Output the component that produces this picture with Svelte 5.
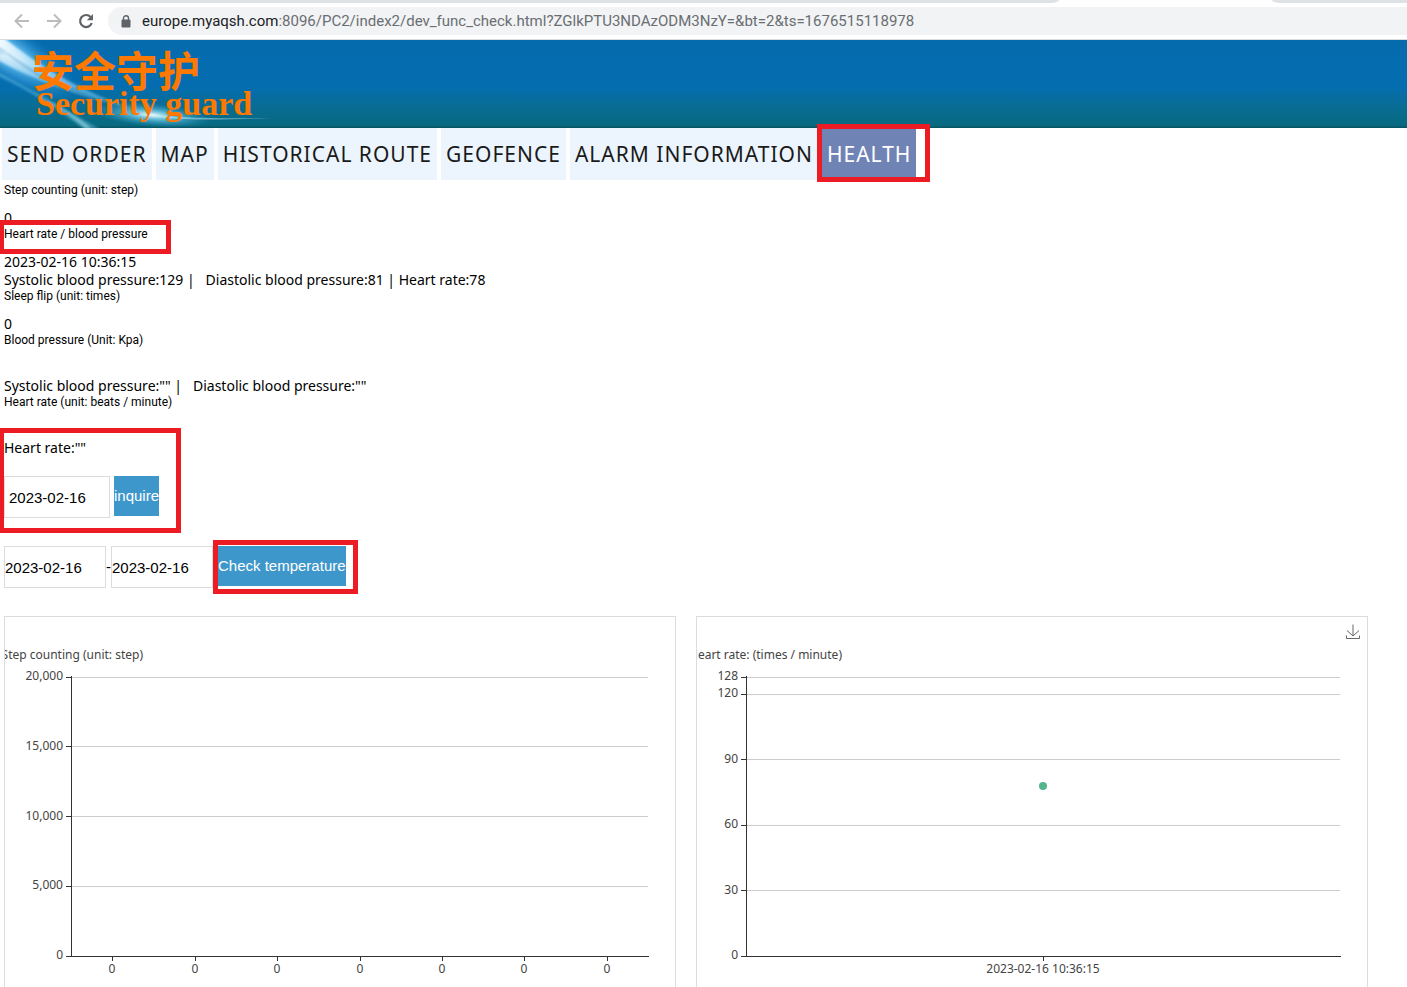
<script lang="ts">
  const tabs = [
    "Send order",
    "Map",
    "Historical route",
    "Geofence",
    "Alarm information",
    "Health",
  ];
  const activeTab = "Health";

  const sections = [
    { title: "Step counting (unit: step)", lines: ["0"] },
    {
      title: "Heart rate / blood pressure",
      marked: true,
      lines: [
        "2023-02-16 10:36:15",
        "Systolic blood pressure:129 |   Diastolic blood pressure:81 | Heart rate:78",
      ],
    },
    { title: "Sleep flip (unit: times)", lines: ["0"] },
    {
      title: "Blood pressure (Unit: Kpa)",
      lines: ["", 'Systolic blood pressure:"" |   Diastolic blood pressure:""'],
    },
    { title: "Heart rate (unit: beats / minute)", lines: [""] },
  ];

  const charts = [
    {
      name: "Step counting (unit: step)",
      nameEnd: 138,
      left: 66,
      max: 20000,
      ticks: [0, 5000, 10000, 15000, 20000],
      labels: ["0", "0", "0", "0", "0", "0", "0"],
      points: [],
      download: false,
    },
    {
      name: "Heart rate: (times / minute)",
      nameEnd: 145,
      left: 49,
      max: 128,
      ticks: [0, 30, 60, 90, 120, 128],
      labels: ["2023-02-16 10:36:15"],
      points: [78],
      download: true,
    },
  ];

  const plotTop = 60;
  const plotHeight = 279;
  const plotRight = 27;
  const plotBottom = plotTop + plotHeight;

  let widths = $state([670, 670]);
  let queryDate = $state("2023-02-16");
  let fromDate = $state("2023-02-16");
  let toDate = $state("2023-02-16");

  function yOf(value: number, max: number) {
    return plotBottom - (value / max) * plotHeight;
  }

  function xOf(index: number, count: number, left: number, width: number) {
    return Math.round(left + ((index + 0.5) * (width - left - plotRight)) / count);
  }
</script>

<div class="window">
  <div class="browser">
    <div class="tab-strip"><div class="tab-corner"></div><div class="tab-end"></div></div>
    <div class="toolbar">
      <button class="tool" aria-label="Back">
        <svg width="16" height="16" viewBox="0 0 16 16"><path d="M15 8H2M8 1.5L1.500 8L8 14.500" fill="none" stroke="#babcbe" stroke-width="2" /></svg>
      </button>
      <button class="tool" aria-label="Forward">
        <svg width="16" height="16" viewBox="0 0 16 16"><path d="M1 8H14M8 1.5L14.500 8L8 14.500" fill="none" stroke="#babcbe" stroke-width="2" /></svg>
      </button>
      <button class="tool" aria-label="Reload">
        <svg width="16" height="16" viewBox="0 0 16 16">
          <path d="M12.600 4A6 6 0 1 0 13.800 10" fill="none" stroke="#5f6368" stroke-width="2.200" />
          <path d="M15 1V7.200H8.800Z" fill="#5f6368" />
        </svg>
      </button>
      <div class="address">
        <svg width="10" height="13" viewBox="0 0 10 13">
          <rect x="0.500" y="4.500" width="9" height="8" rx="1" fill="#5f6368" />
          <path d="M2.500 5V3.200a2.500 2.500 0 0 1 5 0V5" fill="none" stroke="#5f6368" stroke-width="1.400" />
        </svg>
        <span><b>europe.myaqsh.com</b>:8096/PC2/index2/dev_func_check.html?ZGlkPTU3NDAzODM3NzY=&amp;bt=2&amp;ts=1676515118978</span>
      </div>
    </div>
  </div>

  <header class="banner">
    <svg class="rays" width="300" height="88" viewBox="0 0 300 88">
      <defs>
        <radialGradient id="corner">
          <stop offset="0" stop-color="#e4f6ff" />
          <stop offset="0.400" stop-color="#5fbcf0" stop-opacity="0.800" />
          <stop offset="1" stop-color="#1a86cc" stop-opacity="0" />
        </radialGradient>
        <radialGradient id="flare">
          <stop offset="0" stop-color="#f2fdff" />
          <stop offset="0.350" stop-color="#7fd4ee" stop-opacity="0.750" />
          <stop offset="1" stop-color="#2a9ac8" stop-opacity="0" />
        </radialGradient>
        <linearGradient id="beam">
          <stop offset="0" stop-color="#f4fcff" />
          <stop offset="0.450" stop-color="#8fd4f6" stop-opacity="0.700" />
          <stop offset="1" stop-color="#4ab4e0" stop-opacity="0.300" />
        </linearGradient>
        <filter id="soft"><feGaussianBlur stdDeviation="1" /></filter>
      </defs>
      <ellipse cx="6" cy="12" rx="84" ry="28" fill="url(#corner)" transform="rotate(32 6 12)" />
      <g filter="url(#soft)">
        <path d="M-2 -2H4C36 24 78 50 140 72C84 56 34 30 -2 6Z" fill="url(#beam)" />
        <path d="M-2 13L20 17C54 41 92 57 148 72C88 60 42 44 -2 20Z" fill="url(#beam)" opacity="0.700" />
        <path d="M-2 32C30 49 66 70 100 89H84C58 70 30 50 -2 36Z" fill="#6cc4e0" opacity="0.450" />
        <path d="M16 42C44 57 78 76 92 89H86C64 70 40 54 16 42Z" fill="#b0e6f0" opacity="0.500" />
        <path d="M0 8C40 40 85 62 138 76" fill="none" stroke="#0a5c98" stroke-width="1" opacity="0.600" />
      </g>
      <ellipse cx="152" cy="75" rx="60" ry="12" fill="url(#flare)" transform="rotate(5 152 75)" />
      <path d="M130 72C160 77 200 79 270 78C200 81 160 80 130 72Z" fill="#c6f2fa" opacity="0.500" />
    </svg>
    <div class="brand">
      <div class="brand-cn">安全守护</div>
      <div class="brand-en">Security guard</div>
    </div>
  </header>

  <nav>
    {#each tabs as tab}
      <a href="#top" class:active={tab === activeTab}>
        {tab}
        {#if tab === activeTab}<i class="mark mark-tab"></i>{/if}
      </a>
    {/each}
  </nav>

  <main>
    {#each sections as section}
      <section>
        <h2>
          {section.title}
          {#if section.marked}<i class="mark mark-title"></i>{/if}
        </h2>
        {#each section.lines as line}
          <p>{line}</p>
        {/each}
      </section>
    {/each}

    <div class="query">
      <i class="mark mark-query"></i>
      <p>Heart rate:""</p>
      <div class="row">
        <input class="wide" type="text" aria-label="Query date" bind:value={queryDate} />
        <button class="action">inquire</button>
      </div>
    </div>

    <div class="row range">
      <input type="text" aria-label="Start date" bind:value={fromDate} />
      <span class="dash">-</span>
      <input type="text" aria-label="End date" bind:value={toDate} />
      <button class="action">Check temperature<i class="mark mark-action"></i></button>
    </div>

    <div class="charts">
      {#each charts as chart, i}
        <div class="chart" bind:clientWidth={widths[i]}>
          <svg class="plot" width={widths[i]} height="400">
            <text x={chart.nameEnd} y="42" text-anchor="end">{chart.name}</text>
            {#each chart.ticks as tick}
              {@const y = Math.floor(yOf(tick, chart.max))}
              {#if tick > 0}
                <rect x={chart.left} {y} width={widths[i] - chart.left - plotRight} height="1" fill="#ccc" />
              {/if}
              <rect x={chart.left - 5} {y} width="5" height="1" fill="#333" />
              <text x={chart.left - 8} y={Math.round(yOf(tick, chart.max)) + 3} text-anchor="end">{tick.toLocaleString("en-US")}</text>
            {/each}
            <rect x={chart.left} y={plotTop - 1} width="1" height={plotHeight + 2} fill="#333" />
            <rect x={chart.left} y={plotBottom} width={widths[i] - chart.left - plotRight + 1} height="1" fill="#333" />
            {#each chart.labels as label, n}
              {@const x = xOf(n, chart.labels.length, chart.left, widths[i])}
              <rect {x} y={plotBottom} width="1" height="5" fill="#333" />
              <text {x} y={plotBottom + 17} text-anchor="middle">{label}</text>
            {/each}
            {#each chart.points as point, n}
              <circle
                cx={xOf(n, chart.points.length, chart.left, widths[i])}
                cy={yOf(point, chart.max)}
                r="4"
                fill="#54b58c"
              />
            {/each}
          </svg>
          {#if chart.download}
            <button class="download" aria-label="Save as image">
              <svg width="14" height="16" viewBox="0 0 14 16">
                <path d="M7 0.500V12M1 6.500L7 12L13 6.500M0.500 11.500V14.500H13.500V11.500" fill="none" stroke="#666" />
              </svg>
            </button>
          {/if}
        </div>
      {/each}
    </div>
  </main>
</div>

<style>
  :global(body) {
    background: #fff;
  }

  .window {
    height: 100vh;
    overflow: hidden;
    font-family: "Noto Sans", "Open Sans", "Noto Sans CJK SC", sans-serif;
    color: #000;
  }

  button {
    border: none;
    padding: 0;
    background: none;
    cursor: pointer;
  }

  .tab-strip {
    display: flex;
    justify-content: space-between;
    height: 3px;
    background: #fff;
  }

  .tab-corner,
  .tab-end {
    background: #dee1e6;
  }

  .tab-corner {
    flex: 0 1 1059px;
    border-bottom-right-radius: 8px 3px;
  }

  .tab-end {
    flex: 0 0 135px;
    border-bottom-left-radius: 8px 3px;
  }

  .toolbar {
    display: flex;
    align-items: center;
    gap: 16px;
    height: 36px;
    padding-left: 14px;
    border-bottom: 1px solid #dadce0;
  }

  .tool {
    display: flex;
  }

  .address {
    flex: 1;
    display: flex;
    align-items: center;
    gap: 11px;
    height: 28px;
    margin-left: -2px;
    padding-left: 13px;
    border-radius: 14px 0 0 14px;
    background: #f1f3f4;
    color: #6a6e73;
    font-family: Roboto, sans-serif;
    font-size: 15px;
    white-space: nowrap;
  }

  .address b {
    font-weight: 400;
    color: #202124;
  }

  .banner {
    position: relative;
    height: 88px;
    overflow: hidden;
    background: linear-gradient(#066bad, #046db0 52%, #086d98 72%, #086a80 97%, #07505f);
  }

  .rays {
    position: absolute;
    top: 0;
    left: 0;
  }

  .brand {
    position: relative;
    padding: 10px 0 0 32px;
    color: #ff7800;
  }

  .brand-cn {
    font: 700 42px/38px "Noto Sans CJK SC", sans-serif;
  }

  .brand-en {
    padding-left: 4px;
    font: 700 34px/32px "Liberation Serif", serif;
  }

  nav {
    display: flex;
    align-items: flex-start;
    gap: 4px;
    height: 52px;
    padding-left: 2px;
  }

  nav a {
    position: relative;
    padding: 0 5px;
    background: #ecf5fd;
    color: #1a1a1a;
    font-size: 21px;
    line-height: 52px;
    letter-spacing: 1px;
    text-transform: uppercase;
    text-decoration: none;
    white-space: nowrap;
  }

  nav a.active {
    background: #6f84b5;
    color: #fff;
    height: 49px;
  }

  main {
    padding: 3px 39px 0 4px;
  }

  h2 {
    position: relative;
    margin: 0 0 12px;
    font-family: Roboto, sans-serif;
    font-size: 12px;
    font-weight: 400;
    line-height: 14px;
  }

  p {
    margin: 0;
    min-height: 18px;
    font-size: 14px;
    line-height: 18px;
    white-space: pre-wrap;
  }

  .mark {
    position: absolute;
    z-index: 1;
    box-sizing: border-box;
    border: 5px solid #ed1c24;
    pointer-events: none;
  }

  .mark-tab {
    inset: -4px -14px -5px -5px;
  }

  .mark-title {
    left: -5px;
    top: -7px;
    width: 172px;
    height: 34px;
  }

  .mark-query {
    left: -5px;
    top: -11px;
    width: 182px;
    height: 105px;
  }

  .mark-action {
    inset: -6px -12px -8px -5px;
  }

  .query {
    position: relative;
  }

  .query .row {
    margin-top: 19px;
  }

  .row {
    display: flex;
    align-items: flex-start;
    gap: 4px;
  }

  .range {
    gap: 0;
    margin-top: 28px;
  }

  .range .action {
    margin-left: 5px;
  }

  input {
    box-sizing: border-box;
    width: 102px;
    height: 42px;
    padding: 0;
    border: 1px solid #dcdcdc;
    background: #fff;
    color: #000;
    font: 15px "Liberation Sans", sans-serif;
  }

  input.wide {
    width: 106px;
    padding-left: 4px;
  }

  .dash {
    font: 15px/42px "Liberation Sans", sans-serif;
  }

  .action {
    position: relative;
    height: 40px;
    padding-bottom: 2px;
    background: #3e97cb;
    color: #fff;
    font: 15px "Liberation Sans", sans-serif;
    white-space: nowrap;
  }

  .charts {
    display: flex;
    gap: 20px;
    margin-top: 28px;
  }

  .chart {
    position: relative;
    flex: 1;
    min-width: 0;
    height: 400px;
    border: 1px solid #dcdcdc;
  }

  .plot {
    display: block;
    width: 100%;
    overflow: hidden;
  }

  .plot text {
    fill: #444;
    font-size: 12px;
  }

  .download {
    position: absolute;
    top: 7px;
    right: 7px;
    display: flex;
  }
</style>
